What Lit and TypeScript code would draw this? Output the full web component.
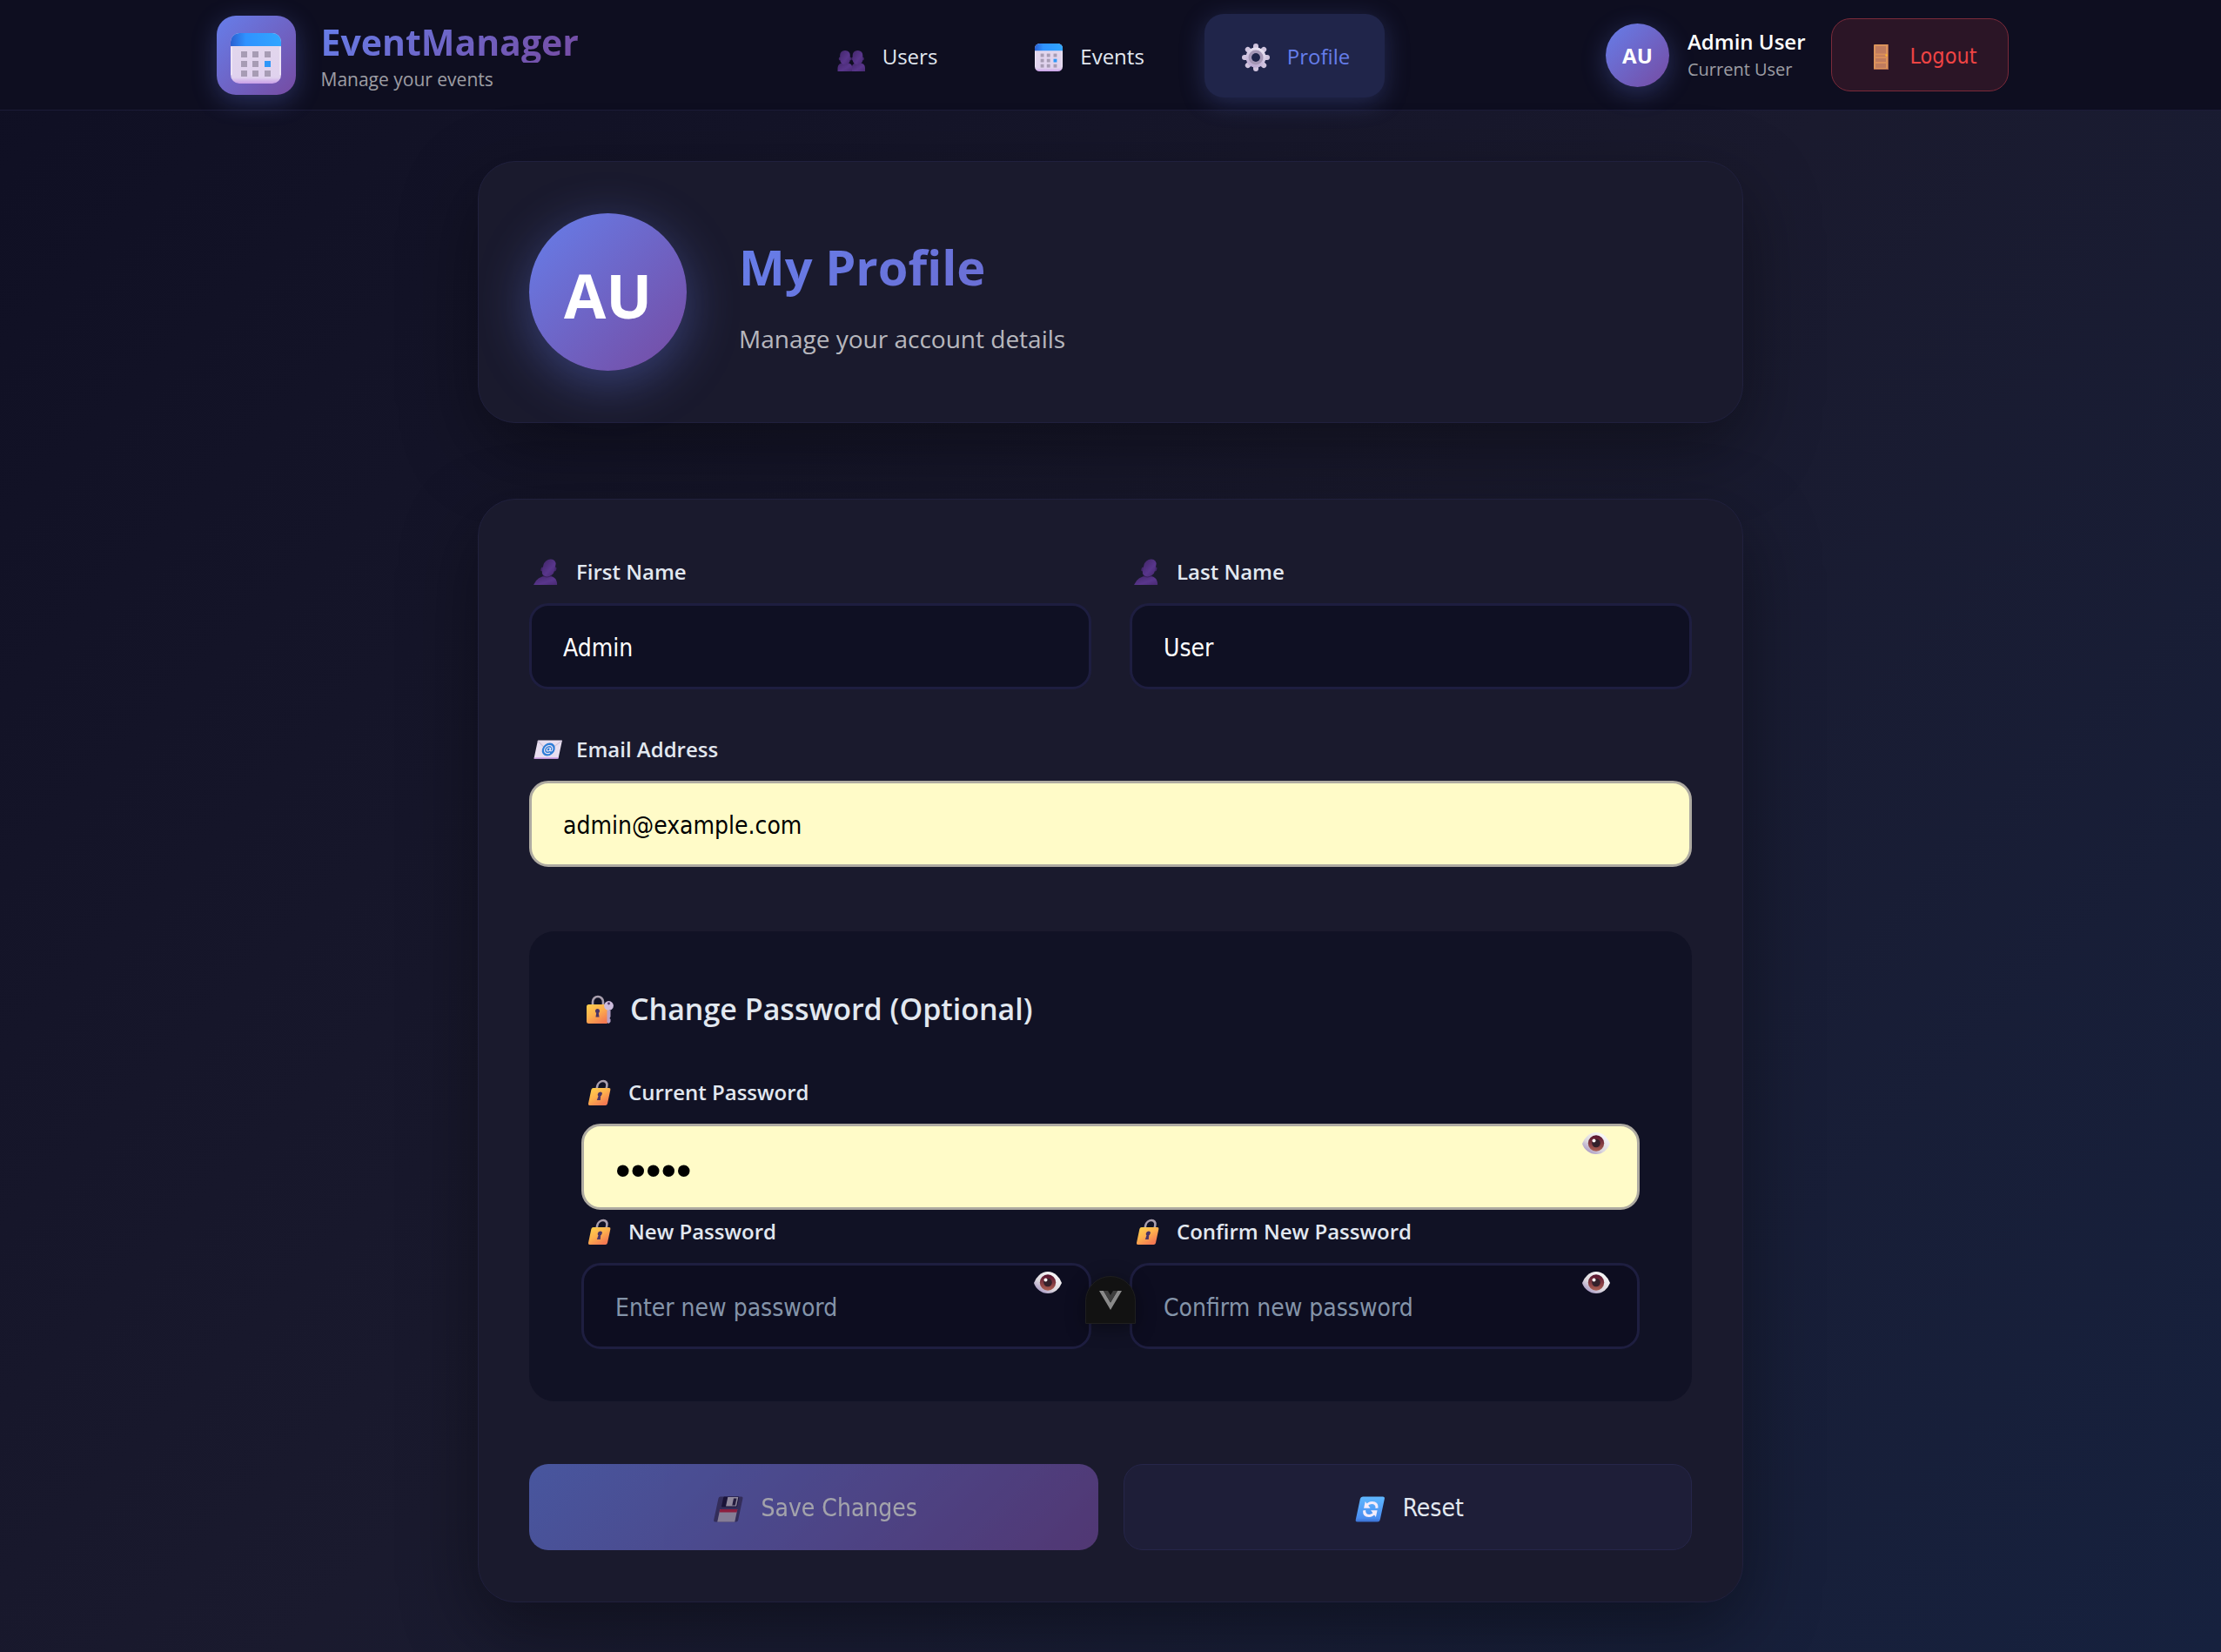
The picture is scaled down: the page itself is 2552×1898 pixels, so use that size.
import { LitElement, html, svg, css } from "lit";
import { customElement, state } from "lit/decorators.js";

const calendarArt = svg`
  <defs>
    <linearGradient id="calTop" x1="0" y1="0" x2="1" y2="0">
      <stop offset="0" stop-color="#2a5fd0"/><stop offset=".3" stop-color="#2f92ff"/><stop offset="1" stop-color="#30a6ff"/>
    </linearGradient>
    <linearGradient id="calBody" x1="0" y1="0" x2="0" y2="1">
      <stop offset="0" stop-color="#e3d8ec"/><stop offset=".88" stop-color="#e0d2ee"/><stop offset="1" stop-color="#c89ee8"/>
    </linearGradient>
  </defs>
  <rect width="58" height="58" rx="10" fill="url(#calBody)"/>
  <path d="M0 15V10A10 10 0 0 1 10 0H48A10 10 0 0 1 58 10V15Z" fill="url(#calTop)"/>
  <path d="M1 16V48M57 16V48" stroke="#f6effb" stroke-width="2" opacity=".6"/>
  ${[21, 32, 43].map((y, r) =>
    [12, 25, 39].map((x, c) => svg`<rect x=${x} y=${y} width="7" height="7" fill=${r === 1 && c === 2 ? "#2f97f8" : "#a79cb4"}/>`)
  )}`;

const violet = svg`<defs><linearGradient id="violet" x1="0" y1="0" x2="1" y2="1">
  <stop offset="0" stop-color="#43276b"/><stop offset=".6" stop-color="#59368c"/><stop offset="1" stop-color="#482a72"/></linearGradient></defs>`;

const lockDefs = svg`<defs>
  <linearGradient id="gold" x1="0" y1="0" x2=".7" y2="1">
    <stop offset="0" stop-color="#ffcf4d"/><stop offset=".5" stop-color="#fdb04d"/><stop offset="1" stop-color="#f47a52"/>
  </linearGradient></defs>`;

const keyhole = (x: number, y: number) => svg`<g fill="#4a3566"><circle cx=${x} cy=${y} r="2.5"/>
  <path d="M${x - 1} ${y}h2l1 7h-4z"/></g>`;

const icons = {
  users: svg`${violet}
    <path d="M5.500 38V34Q5.500 28 14 28Q21 28 22 32V38Z" fill="url(#violet)"/>
    <path d="M22 38V32Q23 28 29 28Q37 28 37 34V38Z" fill="url(#violet)"/>
    ${[14, 28.5].map((x) => svg`
      <ellipse cx=${x - 6} cy="23.500" rx="1.200" ry="2" fill="#43276b"/>
      <ellipse cx=${x + 6} cy="23.500" rx="1.200" ry="2" fill="#43276b"/>
      <rect x=${x - 5.8} y="14" width="11.600" height="16" rx="5.400" fill="url(#violet)"/>`)}`,
  events: svg`<g transform="translate(5 6) scale(.552)">${calendarArt}</g>`,
  gear: svg`<defs><linearGradient id="steel" x1=".7" y1="0" x2=".3" y2="1">
      <stop offset="0" stop-color="#ece6f4"/><stop offset="1" stop-color="#b9a6d0"/></linearGradient></defs>
    <g transform="translate(21 22)">
      ${[0, 45, 90, 135].map((a) => svg`<rect x="-3" y="-16" width="6" height="32" rx="3" transform="rotate(${a})" fill="#d0c4de"/>`)}
      <circle r="11.500" fill="url(#steel)"/>
      <circle r="6.800" fill="none" stroke="#a597b6" stroke-width="3.400"/>
      <circle r="5" fill="#20254a"/>
    </g>`,
  door: svg`<rect x="12" y="8" width="17" height="29" rx="1" fill="#dc935b"/>
    <rect x="14" y="10" width="12" height="25" fill="#c07b5e"/>
    <path d="M13 19.500h14M13 23h14M13 29h14" stroke="#da8f5c" stroke-width="1.800"/>
    <path d="M28.500 8v29M12 36.500h17" stroke="#a8644c" stroke-width="1"/>
    <circle cx="26.500" cy="20.500" r="1.200" fill="#ffb62e"/>`,
  person: svg`${violet}<g transform="translate(7 0) skewX(-12)">
      <path d="M5.500 35Q7.500 24.500 19 24.500Q30.500 24.500 32.500 35Z" fill="url(#violet)"/>
      <ellipse cx="11.500" cy="17" rx="1.500" ry="2.400" fill="#43276b"/>
      <ellipse cx="26.500" cy="17" rx="1.500" ry="2.400" fill="#43276b"/>
      <rect x="12" y="5.500" width="14" height="20" rx="6.600" fill="url(#violet)"/>
      <path d="M14 24.800Q19 27 24 24.800" fill="none" stroke="#3c225f" stroke-width="1"/></g>`,
  email: svg`<g transform="translate(8 0) skewX(-12)">
      <rect x="4" y="9.500" width="28" height="21" rx="1" fill="#e9dff0"/>
      <path d="M4 10L18 22L32 10" fill="none" stroke="#cdc1d8" stroke-width="1"/>
      <path d="M4 30h28" stroke="#cf9ee8" stroke-width="1.500"/>
      <circle cx="18.500" cy="20" r="7.400" fill="#2f7ed6"/>
      <circle cx="18.500" cy="20" r="2" fill="none" stroke="#e9e2f5" stroke-width="1.200"/>
      <path d="M20.500 18v2.500q0 1.500 1.300 1.500t1.300-2a4.600 4.600 0 1 0-2 3.900" fill="none" stroke="#e9e2f5" stroke-width="1.200"/></g>`,
  lock: svg`${lockDefs}<g transform="translate(7 0) skewX(-12)">
      <path d="M14 16V12.500a5.500 5.500 0 0 1 11 0V16" fill="none" stroke="#a99fae" stroke-width="2.600"/>
      <rect x="8" y="15" width="22" height="20" rx="2" fill="url(#gold)"/>
      ${keyhole(19, 22)}</g>`,
  lockKey: svg`${lockDefs}
      <path d="M13 17V13a6 6 0 0 1 12 0V17" fill="none" stroke="#a99fae" stroke-width="2.600"/>
      <rect x="6" y="16" width="25" height="22" rx="2.500" fill="url(#gold)"/>
      ${keyhole(18.5, 23.5)}
      <path d="M29.500 23v13.500l2 1.500l2-2v-3l-1-1l1-2v-7z" fill="#b9a3c8"/>
      <circle cx="31.500" cy="17.500" r="5.400" fill="#cdbcdc"/><circle cx="31.500" cy="15" r="1.400" fill="#4a3566"/>`,
  floppy: svg`<g transform="translate(8 0) skewX(-12)">
      <rect x="3.500" y="7.500" width="28" height="29" rx="2" fill="#453a78"/>
      <rect x="9" y="7.500" width="18" height="12" rx="1" fill="#1a1040"/>
      <rect x="14" y="8" width="12" height="10.500" fill="#e0d4ea"/><rect x="21" y="9.500" width="3.500" height="8" fill="#2a1c4c"/>
      <rect x="8" y="22" width="20" height="14.500" fill="#cdbfdc"/><rect x="8" y="22" width="20" height="3.600" fill="#d8214c"/></g>`,
  reset: svg`<defs><linearGradient id="sky" x1="0" y1="0" x2="0" y2="1">
      <stop offset="0" stop-color="#5fb8ff"/><stop offset=".85" stop-color="#4a8df0"/><stop offset="1" stop-color="#3a6fd0"/></linearGradient></defs>
    <g transform="translate(8 0) skewX(-12)">
      <rect x="4" y="7.500" width="28" height="29" rx="2.500" fill="url(#sky)"/>
      <g fill="none" stroke="#f4ecfb" stroke-width="3">
        <path d="M12.500 18.500Q14.500 14.500 18.500 14.500Q24.500 14.500 25.500 20.800"/>
        <path d="M24.500 25.500Q22.500 29.500 18.500 29.500Q12.500 29.500 11.500 23.200"/></g>
      <path d="M10.500 13V20.800H18ZM26.500 31V23.200H19Z" fill="#f4ecfb"/></g>`,
};

const eye = html`<svg class="eye-art" viewBox="0 0 32 25" aria-hidden="true">
  <defs><linearGradient id="white" x1=".9" y1="0" x2=".1" y2="1">
      <stop offset="0" stop-color="#ffffff"/><stop offset=".6" stop-color="#dcd8de"/><stop offset="1" stop-color="#9a86bd"/></linearGradient>
    <linearGradient id="iris" x1="0" y1="0" x2="0" y2="1">
      <stop offset="0" stop-color="#55122f"/><stop offset="1" stop-color="#ab6052"/></linearGradient></defs>
  <path d="M0 13Q1.500 8 6 4Q10.500 0 16 0Q21.500 0 26 4Q30.500 8 32 13Q30 18 26 21.500Q21.500 25 16 25Q10.500 25 6 21.500Q1.500 18 0 13Z" fill="url(#white)"/>
  <circle cx="16" cy="12.500" r="9.200" fill="url(#iris)"/>
  <circle cx="16" cy="12.500" r="4.800" fill="#33212b"/><circle cx="13.500" cy="9.500" r="2" fill="#fff"/></svg>`;

@customElement("app-root")
export class AppRoot extends LitElement {
  @state() private revealed: Record<string, boolean> = {};

  static styles = css`
    :host {
      display: block;
      min-height: 100vh;
      box-sizing: border-box;
      color: #e2e8f0;
      background: linear-gradient(135deg, #0f0f23 0%, #1a1a2e 50%, #16213e 100%);
      font-family: "Open Sans", "Noto Sans", sans-serif;
    }
    * { box-sizing: border-box; }
    h1, h2, p { margin: 0; }
    button, input { font-family: "DejaVu Sans Condensed", "DejaVu Sans", sans-serif; }
    button { cursor: pointer; }
    .icon { width: 40px; height: 40px; flex: none; }

    .topbar { padding-left: 5px; background: #0e0e20; border-bottom: 1px solid #1c1c38; }
    .bar {
      max-width: 2060px;
      min-height: 126px;
      margin: 0 auto;
      display: flex;
      align-items: center;
      justify-content: space-between;
    }
    .brand { display: flex; align-items: center; gap: 29px; }
    .brand-text { padding-top: 3px; }
    .logo {
      width: 91px; height: 91px;
      display: grid; place-items: center;
      border-radius: 22px;
      background: linear-gradient(135deg, #667eea, #764ba2);
      box-shadow: 0 7px 29px rgba(102, 126, 234, 0.3);
    }
    .logo-art { width: 58px; height: 58px; margin-top: 7px; }
    .brand-name {
      font-size: 41px; font-weight: 700; line-height: 48px;
      color: transparent;
      background: linear-gradient(135deg, #667eea, #764ba2);
      -webkit-background-clip: text; background-clip: text;
    }
    .brand-sub { margin-top: 4px; font-size: 21px; line-height: 30px; color: rgba(255, 255, 255, 0.6); }

    .nav { display: flex; gap: 29px; padding-top: 2px; }
    .nav-link {
      display: flex; align-items: center; gap: 17px;
      height: 96px; padding: 0 40px 0 38px;
      border-radius: 22px;
      color: #e2e8f0; font-size: 24px; text-decoration: none;
    }
    .nav-link.active {
      color: #667eea; background: #20254a;
      box-shadow: 0 6px 29px rgba(102, 126, 234, 0.25);
    }

    .account { display: flex; align-items: center; }
    .avatar {
      flex: none;
      display: grid; place-items: center;
      width: 73px; height: 73px;
      border-radius: 50%;
      background: linear-gradient(135deg, #667eea, #764ba2);
      box-shadow: 0 7px 29px rgba(102, 126, 234, 0.3);
      color: #fff; font-size: 24px; font-weight: 700;
    }
    .who { margin: 0 29px 0 21px; padding-top: 2px; line-height: 32px; }
    .who-name { font-size: 24px; font-weight: 600; color: #fff; }
    .who-role { font-size: 20px; color: rgba(255, 255, 255, 0.6); }
    .logout {
      display: flex; align-items: center; gap: 14px;
      height: 84px; padding: 0 36px;
      border: 1px solid #7b2a3a; border-radius: 22px;
      background: #2b1526; color: #ef4444; font-size: 25px;
    }
    .logout span, .action span, .heading span { padding-top: 2px; }

    .page {
      max-width: 1454px;
      margin: 0 auto;
      padding: 58px 0;
      display: grid; gap: 87px;
    }
    .card {
      padding: 59px 58px;
      border: 1px solid #20203d; border-radius: 43px;
      background: #1a1a2d;
      box-shadow: 0 29px 87px rgba(0, 0, 0, 0.4);
    }
    .intro { display: flex; align-items: center; gap: 60px; }
    .avatar.large {
      width: 181px; height: 181px; font-size: 70px;
      padding-top: 6px;
      box-shadow: 0 14px 58px rgba(102, 126, 234, 0.4);
    }
    .intro-text { flex: 1; padding-top: 4px; }
    .title {
      font-size: 56px; font-weight: 700; line-height: 84px;
      color: transparent;
      background: linear-gradient(135deg, #667eea, #764ba2);
      -webkit-background-clip: text; background-clip: text;
    }
    .subtitle { margin-top: 19px; font-size: 28px; line-height: 44px; color: rgba(255, 255, 255, 0.7); }

    .form { display: flex; flex-direction: column; }
    .pair { display: grid; grid-template-columns: 1fr 1fr; column-gap: 44px; position: relative; }
    .field { display: flex; flex-direction: column; gap: 13px; }
    .details { display: grid; gap: 45px; }
    .label {
      display: flex; align-items: center; gap: 14px;
      height: 47px;
      font-size: 24px; font-weight: 600;
    }
    .input {
      width: 100%; height: 99px; padding: 3px 36px 0;
      border: 3px solid #1e1e40; border-radius: 22px;
      background: #0f1023; color: #fff; font-size: 28px;
      outline: none;
    }
    .input::placeholder { color: #8494a9; opacity: 1; }
    .input.filled { background: #fffbc8; border-color: #aeaaa1; color: #000; }
    .input.filled[type="password"] { padding-top: 8px; font-family: "Liberation Sans", sans-serif; font-size: 50px; }
    .password {
      margin: 74px 0 72px;
      padding: 60px;
      border-radius: 29px;
      background: #111225;
    }
    .password .input:not(.filled) { background: #0d0d20; }
    .heading {
      display: flex; align-items: center; gap: 16px;
      margin-bottom: 45px;
      font-size: 34px; font-weight: 600; line-height: 56px;
    }
    .heading span { line-height: 54px; }
    .stack { display: grid; gap: 1px; }
    .control { position: relative; display: flex; }
    .eye {
      position: absolute; top: 10px; right: 34px;
      padding: 0; border: 0; background: none; line-height: 0;
    }
    .eye-art { width: 32px; height: 25px; }
    .devtools {
      position: absolute; left: calc(50% - 29px); top: 75px;
      width: 58px; height: 55px; padding: 3px 0 0;
      border: 1px solid #1f1f1f; border-radius: 29px 29px 0 0;
      background: #121212;
      box-shadow: 0 4px 22px rgba(0, 0, 0, 0.4);
    }
    .devtools-art { width: 26px; height: 22px; }

    .actions { display: grid; grid-template-columns: 1fr 1fr; gap: 29px; }
    .action {
      display: flex; align-items: center; justify-content: center; gap: 19px;
      height: 99px; border-radius: 22px; font-size: 28px;
    }
    .save { border: 0; color: #fff; background: linear-gradient(135deg, #667eea, #764ba2); opacity: 0.6; }
    .reset { border: 1px solid #26264a; color: #e2e8f0; background: #1e1e38; }
  `;

  private icon(art: unknown) {
    return html`<svg class="icon" viewBox="0 0 40 40" aria-hidden="true">${art}</svg>`;
  }

  private toggle(id: string) {
    this.revealed = { ...this.revealed, [id]: !this.revealed[id] };
  }

  private textField(id: string, label: string, art: unknown, value: string, type = "text", filled = false) {
    return html`<div class="field">
      <label class="label" for=${id}>${this.icon(art)}<span>${label}</span></label>
      <input class="input ${filled ? "filled" : ""}" id=${id} type=${type} .value=${value} />
    </div>`;
  }

  private passwordField(id: string, label: string, placeholder: string, value = "") {
    return html`<div class="field">
      <label class="label" for=${id}>${this.icon(icons.lock)}<span>${label}</span></label>
      <div class="control">
        <input class="input ${value ? "filled" : ""}" id=${id} type=${this.revealed[id] ? "text" : "password"}
          placeholder=${placeholder} .value=${value} />
        <button class="eye" type="button" aria-label="Show password" @click=${() => this.toggle(id)}>${eye}</button>
      </div>
    </div>`;
  }

  render() {
    return html`
      <header class="topbar">
        <div class="bar">
          <div class="brand">
            <div class="logo"><svg class="logo-art" viewBox="0 0 58 58" aria-hidden="true">${calendarArt}</svg></div>
            <div class="brand-text">
              <div class="brand-name">EventManager</div>
              <div class="brand-sub">Manage your events</div>
            </div>
          </div>
          <nav class="nav">
            <a class="nav-link" href="#users">${this.icon(icons.users)}<span>Users</span></a>
            <a class="nav-link" href="#events">${this.icon(icons.events)}<span>Events</span></a>
            <a class="nav-link active" href="#profile" aria-current="page">${this.icon(icons.gear)}<span>Profile</span></a>
          </nav>
          <div class="account">
            <div class="avatar">AU</div>
            <div class="who">
              <div class="who-name">Admin User</div>
              <div class="who-role">Current User</div>
            </div>
            <button class="logout" type="button">${this.icon(icons.door)}<span>Logout</span></button>
          </div>
        </div>
      </header>

      <main class="page">
        <section class="card intro">
          <div class="avatar large">AU</div>
          <div class="intro-text">
            <h1 class="title">My Profile</h1>
            <p class="subtitle">Manage your account details</p>
          </div>
        </section>

        <form class="card form" @submit=${(e: Event) => e.preventDefault()}>
          <div class="details">
            <div class="pair">
              ${this.textField("first-name", "First Name", icons.person, "Admin")}
              ${this.textField("last-name", "Last Name", icons.person, "User")}
            </div>
            ${this.textField("email", "Email Address", icons.email, "admin@example.com", "email", true)}
          </div>

          <section class="password">
            <h2 class="heading">${this.icon(icons.lockKey)}<span>Change Password (Optional)</span></h2>
            <div class="stack">
              ${this.passwordField("current-password", "Current Password", "Enter current password", "admin")}
              <div class="pair">
                ${this.passwordField("new-password", "New Password", "Enter new password")}
                ${this.passwordField("confirm-password", "Confirm New Password", "Confirm new password")}
                <button class="devtools" type="button" aria-label="Toggle devtools">
                  <svg class="devtools-art" viewBox="0 0 26 22" aria-hidden="true">
                    <path d="M0 0h5l8 13.500L21 0h5L13 22z" fill="#8a8a8a"/>
                    <path d="M5 0h5l3 5l3-5h5l-8 13.500z" fill="#3e3e3e"/>
                  </svg>
                </button>
              </div>
            </div>
          </section>

          <div class="actions">
            <button class="action save" type="submit" disabled>${this.icon(icons.floppy)}<span>Save Changes</span></button>
            <button class="action reset" type="reset">${this.icon(icons.reset)}<span>Reset</span></button>
          </div>
        </form>
      </main>
    `;
  }
}
